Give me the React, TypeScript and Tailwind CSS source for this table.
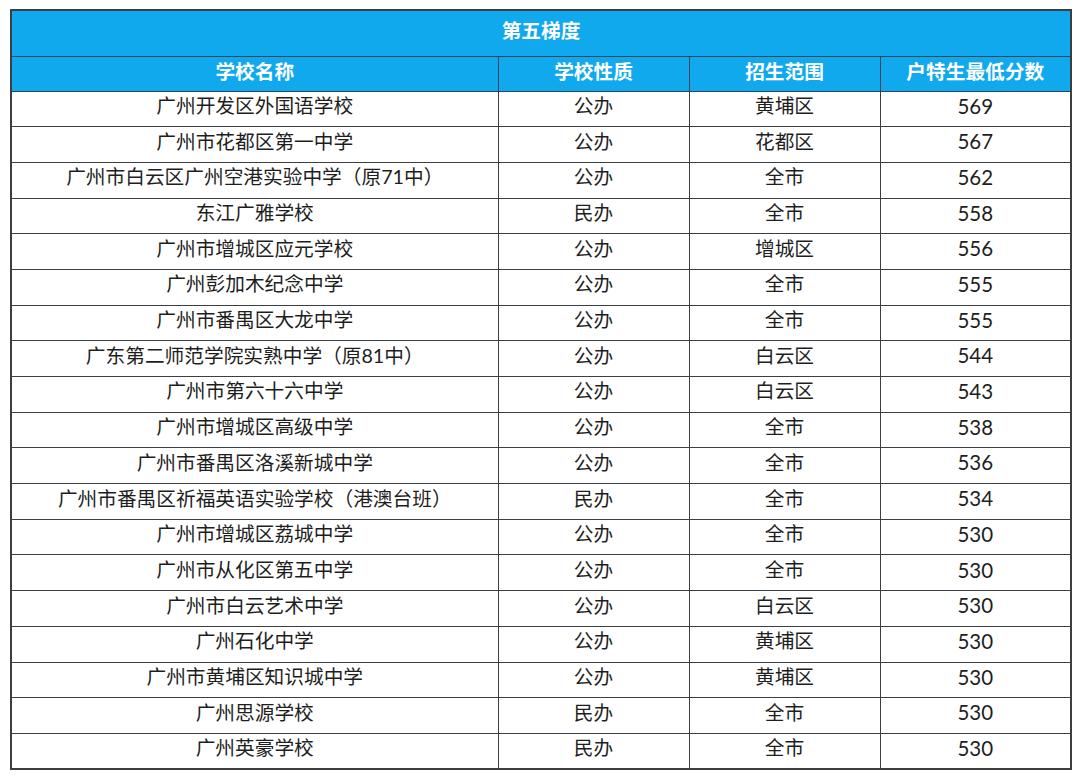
import React from "react";

const rows: [string, string, string, string][] = [
  ["广州开发区外国语学校", "公办", "黄埔区", "569"],
  ["广州市花都区第一中学", "公办", "花都区", "567"],
  ["广州市白云区广州空港实验中学（原71中）", "公办", "全市", "562"],
  ["东江广雅学校", "民办", "全市", "558"],
  ["广州市增城区应元学校", "公办", "增城区", "556"],
  ["广州彭加木纪念中学", "公办", "全市", "555"],
  ["广州市番禺区大龙中学", "公办", "全市", "555"],
  ["广东第二师范学院实熟中学（原81中）", "公办", "白云区", "544"],
  ["广州市第六十六中学", "公办", "白云区", "543"],
  ["广州市增城区高级中学", "公办", "全市", "538"],
  ["广州市番禺区洛溪新城中学", "公办", "全市", "536"],
  ["广州市番禺区祈福英语实验学校（港澳台班）", "民办", "全市", "534"],
  ["广州市增城区荔城中学", "公办", "全市", "530"],
  ["广州市从化区第五中学", "公办", "全市", "530"],
  ["广州市白云艺术中学", "公办", "白云区", "530"],
  ["广州石化中学", "公办", "黄埔区", "530"],
  ["广州市黄埔区知识城中学", "公办", "黄埔区", "530"],
  ["广州思源学校", "民办", "全市", "530"],
  ["广州英豪学校", "民办", "全市", "530"],
];

export default function App() {
  return (
    <div
      className="w-[1080px] h-[779px] bg-white pt-[9px] pl-[10px]"
      style={{ fontFamily: '"Lato", "Noto Sans CJK SC", sans-serif' }}
    >
      <table className="w-[1060px] table-fixed border-collapse border-2 border-[#3a3f44] text-center">
        <colgroup>
          <col className="w-[487px]" />
          <col className="w-[191px]" />
          <col className="w-[191px]" />
          <col className="w-[191px]" />
        </colgroup>
        <thead>
          <tr className="h-[46px] bg-[#11a9ee]">
            <th
              colSpan={4}
              className="border border-[#2c4656] text-white text-[19.7px] font-bold leading-none pb-[4px]"
            >
              第五梯度
            </th>
          </tr>
          <tr className="h-[35px] bg-[#11a9ee]">
            {["学校名称", "学校性质", "招生范围", "户特生最低分数"].map((h) => (
              <th
                key={h}
                className="border border-[#2c4656] text-white text-[19.7px] font-bold leading-none pb-[4px]"
              >
                {h}
              </th>
            ))}
          </tr>
        </thead>
        <tbody>
          {rows.map((r, i) => (
            <tr key={i} className="h-[35.7px]">
              {r.map((c, j) => (
                <td
                  key={j}
                  className={`border border-[#3a3f44] text-[#1e1e1e] leading-none pb-[6px] ${
                    j === 3 ? "text-[20.5px]" : "text-[19.7px]"
                  }`}
                >
                  {c}
                </td>
              ))}
            </tr>
          ))}
        </tbody>
      </table>
    </div>
  );
}
